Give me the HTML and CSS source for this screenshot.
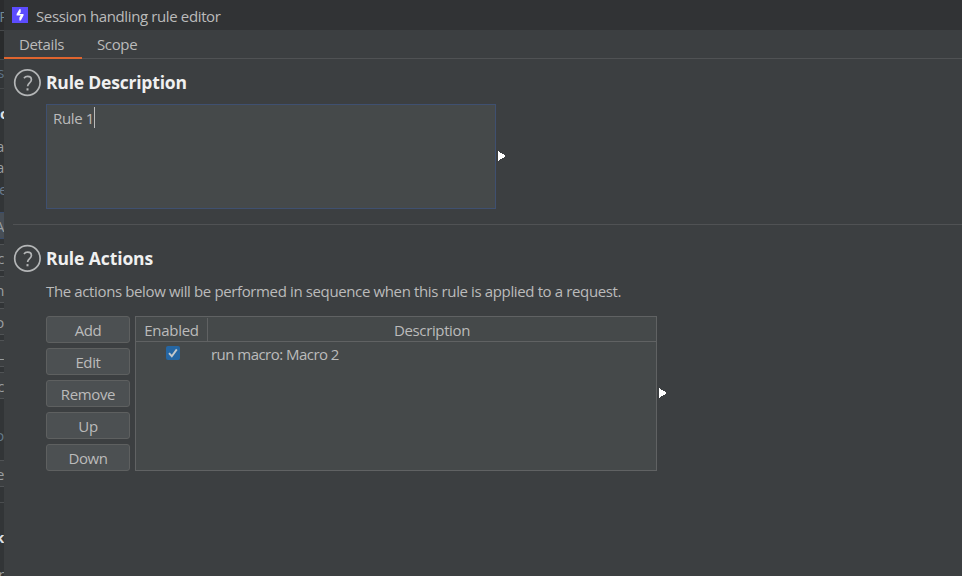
FILE: index.html
```html
<!DOCTYPE html>
<html lang="en">
<head>
<meta charset="utf-8">
<title>Session handling rule editor</title>
<link rel="stylesheet" href="styles.css">
</head>
<body>
<div class="desktop">
  <div class="behind" aria-hidden="true">
    <div class="b-title"><span>P</span></div>
    <div class="b-tabs"></div>
    <div class="b-sub"><span>s</span></div>
    <div class="b-head"><span>o</span></div>
    <div class="b-line"><span>a</span></div>
    <div class="b-line"><span>a</span></div>
    <div class="b-line b-last"><span>e</span></div>
    <div class="b-btn b-focus"><span>A</span></div>
    <div class="b-btn"><span>c</span></div>
    <div class="b-btn"><span>n</span></div>
    <div class="b-btn"><span>o</span></div>
    <div class="b-btn"><span>L</span></div>
    <div class="b-btn"><span>c</span></div>
    <div class="b-gap"><span>o</span></div>
    <div class="b-btn"><span>e</span></div>
    <div class="b-rule"></div>
    <div class="b-head b-low"><span>k</span></div>
    <div class="b-line b-end"><span>r</span></div>
  </div>
  <main class="dialog">
    <header class="titlebar">
      <svg class="logo" width="16" height="16" viewBox="0 0 16 16"><path fill="#5c4cff" d="M0 0h16v16H0z"/><path fill="#fff" d="M7.4 2.2h1.3v3.2L7.3 7.1h4.2v1.5L8.8 13.6H7.4v-3.2l1.4-1.9H4.6V7.1z"/></svg>
      <span class="title">Session handling rule editor</span>
    </header>
    <nav class="tabs">
      <div class="tab active">Details</div>
      <div class="tab">Scope</div>
    </nav>
    <section class="description">
      <div class="heading">
        <svg class="help" width="28" height="28" viewBox="0 0 28 28"><circle cx="14.4" cy="13.6" r="12.7"/><path d="M11 9.2C11.9 7.9 13.2 7.4 14.6 7.4c2.4 0 3.8 1.3 3.8 3.3 0 3-3.8 3.2-3.8 6.6"/><path d="M13.5 19.3h2v2.2h-2z" class="dot"/></svg>
        <h2>Rule Description</h2>
      </div>
      <div class="field-row">
        <div class="field"><span>Rule 1</span><i class="caret"></i></div>
        <svg class="arrow" width="8" height="10" viewBox="0 0 8 10"><path d="M0 0l8 5-8 5z"/></svg>
      </div>
    </section>
    <section class="actions">
      <div class="heading">
        <svg class="help" width="28" height="28" viewBox="0 0 28 28"><circle cx="14.4" cy="14.4" r="12.7"/><path d="M11 10C11.9 8.7 13.2 8.2 14.6 8.2c2.4 0 3.8 1.3 3.8 3.3 0 3-3.8 3.2-3.8 6.6"/><path d="M13.5 20.1h2v2.2h-2z" class="dot"/></svg>
        <h2 class="h-act">Rule Actions</h2>
      </div>
      <p class="note">The actions below will be performed in sequence when this rule is applied to a request.</p>
      <div class="panel">
        <div class="buttons">
          <button>Add</button>
          <button>Edit</button>
          <button>Remove</button>
          <button>Up</button>
          <button>Down</button>
        </div>
        <div class="table">
          <div class="thead"><div class="c-en">Enabled</div><div class="c-desc">Description</div></div>
          <div class="row">
            <div class="cell-check"><svg width="14" height="14" viewBox="0 0 14 14"><rect width="14" height="14" rx="2" fill="#2566a3"/><path d="M3 7.2l2.8 3L10.8 3.4" fill="none" stroke="#c4c7c9" stroke-width="1.9"/></svg></div>
            <div class="cell-name">run macro: Macro 2</div>
          </div>
        </div>
        <svg class="arrow" width="8" height="10" viewBox="0 0 8 10"><path d="M0 0l8 5-8 5z"/></svg>
      </div>
    </section>
  </main>
</div>
</body>
</html>
```
FILE: styles.css
```css
* { box-sizing: border-box; }
body {
  margin: 0;
  background: #3c3f41;
  color: #bbbbbb;
  font: 15px/20px "Open Sans", "Noto Sans", sans-serif;
  letter-spacing: -0.37px;
}
h2, p { margin: 0; }
.desktop { display: flex; width: 962px; height: 576px; overflow: hidden; }

.behind { flex: none; width: 4px; height: 576px; overflow: hidden; background: #323537; color: #999da0; }
.behind > div { display: flex; align-items: center; justify-content: flex-end; width: 4px; overflow: hidden; white-space: nowrap; }
.behind span { margin-top: -4px; }
.b-title { height: 31px; background: #2b2c2e; border-bottom: 1px solid #45484a; color: #6f8796; }
.b-title span { margin: 1px -4px 0 0; }
.b-tabs { height: 29px; background: #292b2c; border-bottom: 1px solid #45484a; }
.b-sub { height: 29px; border-bottom: 1px solid #45484a; color: #5d7185; }
.b-head { height: 48px; font-weight: 700; color: #dde0e6; }
.b-head span { margin: 0 -5px 0 0; }
.b-line { height: 21px; }
.b-last { height: 33px; padding-bottom: 10px; color: #68788a; }
.b-last span { margin-right: -3px; }
.b-btn { flex: none; height: 27px; margin-bottom: 5px; background: #3c3f41; border: solid #505355; border-width: 1px 0; }
.b-btn span { margin-top: 0; }
.b-focus { background: #474e56; border-color: #3a4c6b; }
.b-gap { height: 56px; padding-bottom: 4px; color: #62798a; }
.b-gap span { margin-top: 10px; }
.b-rule { height: 11px; border-bottom: 1px solid #4a4d4f; }
.b-low { height: 68px; }
.b-low span { margin-right: 0; }
.b-end { height: 9px; }

.dialog { flex: 1; min-width: 0; background: #3c3f41; }
.titlebar { display: flex; align-items: center; height: 30px; padding: 1px 0 0 8px; background: #313335; }
.logo { margin-top: -1px; }
.title { margin-left: 8px; }
.tabs { display: flex; height: 29px; border-bottom: 1px solid #505254; }
.tab { height: 29px; padding: 4px 15px 0; }
.tab.active { width: 78px; border-bottom: 2px solid #e0652f; }

.heading { display: flex; align-items: center; gap: 5px; height: 28px; }
h2 { margin-top: -2px; font-size: 17.5px; line-height: 28px; font-weight: 700; color: #f0f0f0; letter-spacing: -0.2px; }
.h-act { padding-top: 1px; letter-spacing: -0.1px; }
.help { fill: none; stroke: #b4b6b7; stroke-width: 1.7; }
.help .dot { fill: #b4b6b7; stroke: none; }
.description { height: 166px; margin-left: 9px; padding-top: 10px; border-bottom: 1px solid #505254; }
.field-row { display: flex; align-items: center; gap: 2px; margin: 7px 0 0 33px; }
.field { display: flex; width: 450px; height: 105px; padding: 1px 6px; border: 1px solid #3f5070; background: #45494a; line-height: 24px; }
.caret { width: 1px; height: 21px; margin-top: 1px; background: #bbbbbb; }
.arrow { flex: none; margin-bottom: 1px; fill: #fff; shape-rendering: crispEdges; }

.actions { padding: 19px 0 0 9px; }
.note { margin: 9px 0 0 33px; white-space: nowrap; }
.panel { display: flex; align-items: center; margin: 15px 0 0 33px; }
.buttons { display: flex; flex-direction: column; gap: 5px; width: 84px; }
button {
  height: 27px;
  padding: 0;
  border: 1px solid #5e6060;
  border-radius: 3px;
  background: #4c5052;
  color: #bbbbbb;
  font: inherit;
  letter-spacing: inherit;
}
.table { width: 522px; height: 155px; margin: 0 2px 0 5px; border: 1px solid #606263; background: #45494a; }
.thead { display: flex; height: 25px; border-bottom: 1px solid #606263; line-height: 27px; text-align: center; }
.c-en { width: 72px; border-right: 1px solid #606263; margin-top: 1px; height: 23px; line-height: 25px; letter-spacing: -0.3px; }
.c-desc { flex: 1; }
.row { display: flex; align-items: center; height: 24px; }
.cell-check { display: flex; justify-content: center; width: 75px; padding: 0 2px 3px 0; }
.cell-name { margin-top: -1px; letter-spacing: -0.53px; }
```
